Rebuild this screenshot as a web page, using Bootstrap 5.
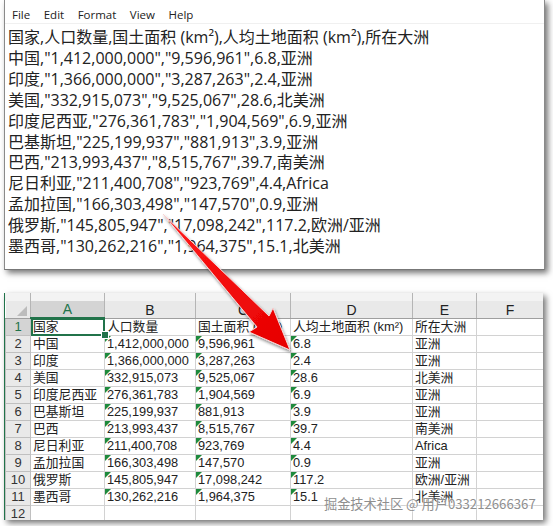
<!DOCTYPE html>
<html lang="zh">
<head>
<meta charset="utf-8">
<title>CSV to Excel</title>
<link href="https://cdn.jsdelivr.net/npm/bootstrap@5.3.0/dist/css/bootstrap.min.css" rel="stylesheet">
<style>
html,body{height:526px;overflow:hidden;background:#fff}
body{padding-left:4px;position:relative}
.pad-win{width:541px;height:270px;background:#fff;border-left:1px solid #8a8a8a;border-bottom:1px solid #777;border-right:1px solid #8a8a8a;box-shadow:3px 3px 6px rgba(0,0,0,.55)}
.pad-menu{height:24px;padding-left:7px;gap:13.5px;font:11.5px/24px "Open Sans",sans-serif;color:#222;border-bottom:1px solid #f0f0f0;padding-top:3px}
.pad-text{padding:3px 0 0 3px;font:16px/20.9px "Open Sans","Noto Sans CJK SC",sans-serif;color:#222;white-space:pre}
.xl-win{width:539px;height:227px;margin-top:23px;background:#fff;overflow:hidden;border-left:1px solid #21734a;box-shadow:3px 3px 6px rgba(0,0,0,.55);background:linear-gradient(#f3f3f3,#eee 8px,#fff 8px)}
.xl-table{table-layout:fixed;width:538px;margin:0;border-collapse:collapse;font:12.8px/16px "Liberation Sans","Noto Sans CJK SC",sans-serif;color:#222}
.xl-table th,.xl-table td{height:17px;padding:0 0 0 2px;border:1px solid #d2d2d2;white-space:nowrap;overflow:hidden;position:relative;font-weight:400;background:#fff;color:#222;box-shadow:none}
.xl-table thead th{height:25px;padding:8px 0 0;text-align:center;background:#ececec;border:0;border-right:1px solid #b5b5b5;border-bottom:1px solid #9f9f9f;font-size:14px;line-height:16px;background:linear-gradient(#f3f3f3 8px,#e9e9e9 8px)}
.xl-table thead th.col-sel{background:linear-gradient(#f3f3f3 8px,#d4d4d4 8px);color:#21734a;border-bottom:2px solid #21734a}
.xl-table tbody th{background:#e9e9e9;text-align:center;padding:0;font-size:13px;color:#333;border-color:#c0c0c0}
.xl-table tbody tr:first-child th{background:#d4d4d4;color:#21734a}
.w-hdr{width:25px}.w-a{width:74px}.w-b{width:91px}.w-c{width:95px}.w-d{width:122px}.w-e{width:64px}.w-f{width:67px}
.xl-table td.flag::before{content:"";position:absolute;left:0;top:0;border-top:6px solid #1e8a3c;border-right:6px solid transparent}
.xl-table td.cell-sel{outline:2px solid #21734a;outline-offset:-2px}
.corner-mark{position:absolute;right:3px;bottom:2px;border-bottom:10px solid #bcbcbc;border-left:10px solid transparent}
.sel-handle{position:absolute;left:101px;top:331px;width:6px;height:6px;background:#21734a;border:1px solid #fff;box-sizing:content-box}
.arrow-layer{position:absolute;left:0;top:0;pointer-events:none}
.wm-text{position:absolute;left:324px;top:494px;font:13.2px/20px "Noto Sans CJK SC","Liberation Sans",sans-serif;color:#8f8f8f;text-shadow:0 0 2px #fff,0 0 2px #fff;white-space:nowrap}
</style>
</head>
<body>
<div class="pad-win">
  <div class="pad-menu d-flex"><span>File</span><span>Edit</span><span>Format</span><span>View</span><span>Help</span></div>
  <div class="pad-text">国家,人口数量,国土面积 (km²),人均土地面积 (km²),所在大洲
中国,"1,412,000,000","9,596,961",6.8,亚洲
印度,"1,366,000,000","3,287,263",2.4,亚洲
美国,"332,915,073","9,525,067",28.6,北美洲
印度尼西亚,"276,361,783","1,904,569",6.9,亚洲
巴基斯坦,"225,199,937","881,913",3.9,亚洲
巴西,"213,993,437","8,515,767",39.7,南美洲
尼日利亚,"211,400,708","923,769",4.4,Africa
孟加拉国,"166,303,498","147,570",0.9,亚洲
俄罗斯,"145,805,947","17,098,242",117.2,欧洲/亚洲
墨西哥,"130,262,216","1,964,375",15.1,北美洲</div>
</div>
<div class="xl-win">
  <table class="table xl-table">
    <colgroup><col class="w-hdr"><col class="w-a"><col class="w-b"><col class="w-c"><col class="w-d"><col class="w-e"><col class="w-f"></colgroup>
    <thead><tr><th><span class="corner-mark"></span></th><th class="col-sel">A</th><th>B</th><th>C</th><th>D</th><th>E</th><th>F</th></tr></thead>
    <tbody>
      <tr><th>1</th><td class="cell-sel">国家</td><td>人口数量</td><td>国土面积 (km²)</td><td>人均土地面积 (km²)</td><td>所在大洲</td><td></td></tr>
      <tr><th>2</th><td>中国</td><td class="flag">1,412,000,000</td><td class="flag">9,596,961</td><td class="flag">6.8</td><td>亚洲</td><td></td></tr>
      <tr><th>3</th><td>印度</td><td class="flag">1,366,000,000</td><td class="flag">3,287,263</td><td class="flag">2.4</td><td>亚洲</td><td></td></tr>
      <tr><th>4</th><td>美国</td><td class="flag">332,915,073</td><td class="flag">9,525,067</td><td class="flag">28.6</td><td>北美洲</td><td></td></tr>
      <tr><th>5</th><td>印度尼西亚</td><td class="flag">276,361,783</td><td class="flag">1,904,569</td><td class="flag">6.9</td><td>亚洲</td><td></td></tr>
      <tr><th>6</th><td>巴基斯坦</td><td class="flag">225,199,937</td><td class="flag">881,913</td><td class="flag">3.9</td><td>亚洲</td><td></td></tr>
      <tr><th>7</th><td>巴西</td><td class="flag">213,993,437</td><td class="flag">8,515,767</td><td class="flag">39.7</td><td>南美洲</td><td></td></tr>
      <tr><th>8</th><td>尼日利亚</td><td class="flag">211,400,708</td><td class="flag">923,769</td><td class="flag">4.4</td><td>Africa</td><td></td></tr>
      <tr><th>9</th><td>孟加拉国</td><td class="flag">166,303,498</td><td class="flag">147,570</td><td class="flag">0.9</td><td>亚洲</td><td></td></tr>
      <tr><th>10</th><td>俄罗斯</td><td class="flag">145,805,947</td><td class="flag">17,098,242</td><td class="flag">117.2</td><td>欧洲/亚洲</td><td></td></tr>
      <tr><th>11</th><td>墨西哥</td><td class="flag">130,262,216</td><td class="flag">1,964,375</td><td class="flag">15.1</td><td>北美洲</td><td></td></tr>
      <tr><th>12</th><td></td><td></td><td></td><td></td><td></td><td></td></tr>
    </tbody>
  </table>
</div>
<span class="sel-handle"></span>
<svg class="arrow-layer" width="553" height="526" viewBox="0 0 553 526" aria-hidden="true">
  <defs>
    <linearGradient id="arrowRed" x1="0" y1="0" x2="1" y2="1">
      <stop offset="0" stop-color="#ff1a1a"/><stop offset="1" stop-color="#e60000"/>
    </linearGradient>
    <filter id="arrowShadow" x="-20%" y="-20%" width="140%" height="140%"><feDropShadow dx="1" dy="2" stdDeviation="1.5" flood-color="#000" flood-opacity=".45"/></filter>
  </defs>
  <polygon points="163,214 269,316 273,308 290,350 249,332 257,327" fill="url(#arrowRed)" stroke="#f7d6d6" stroke-width="1" stroke-linejoin="round" filter="url(#arrowShadow)"/>
</svg>
<div class="wm-text">掘金技术社区 @ 用户033212666367</div>
<script src="https://cdn.jsdelivr.net/npm/bootstrap@5.3.0/dist/js/bootstrap.bundle.min.js"></script>
</body>
</html>
